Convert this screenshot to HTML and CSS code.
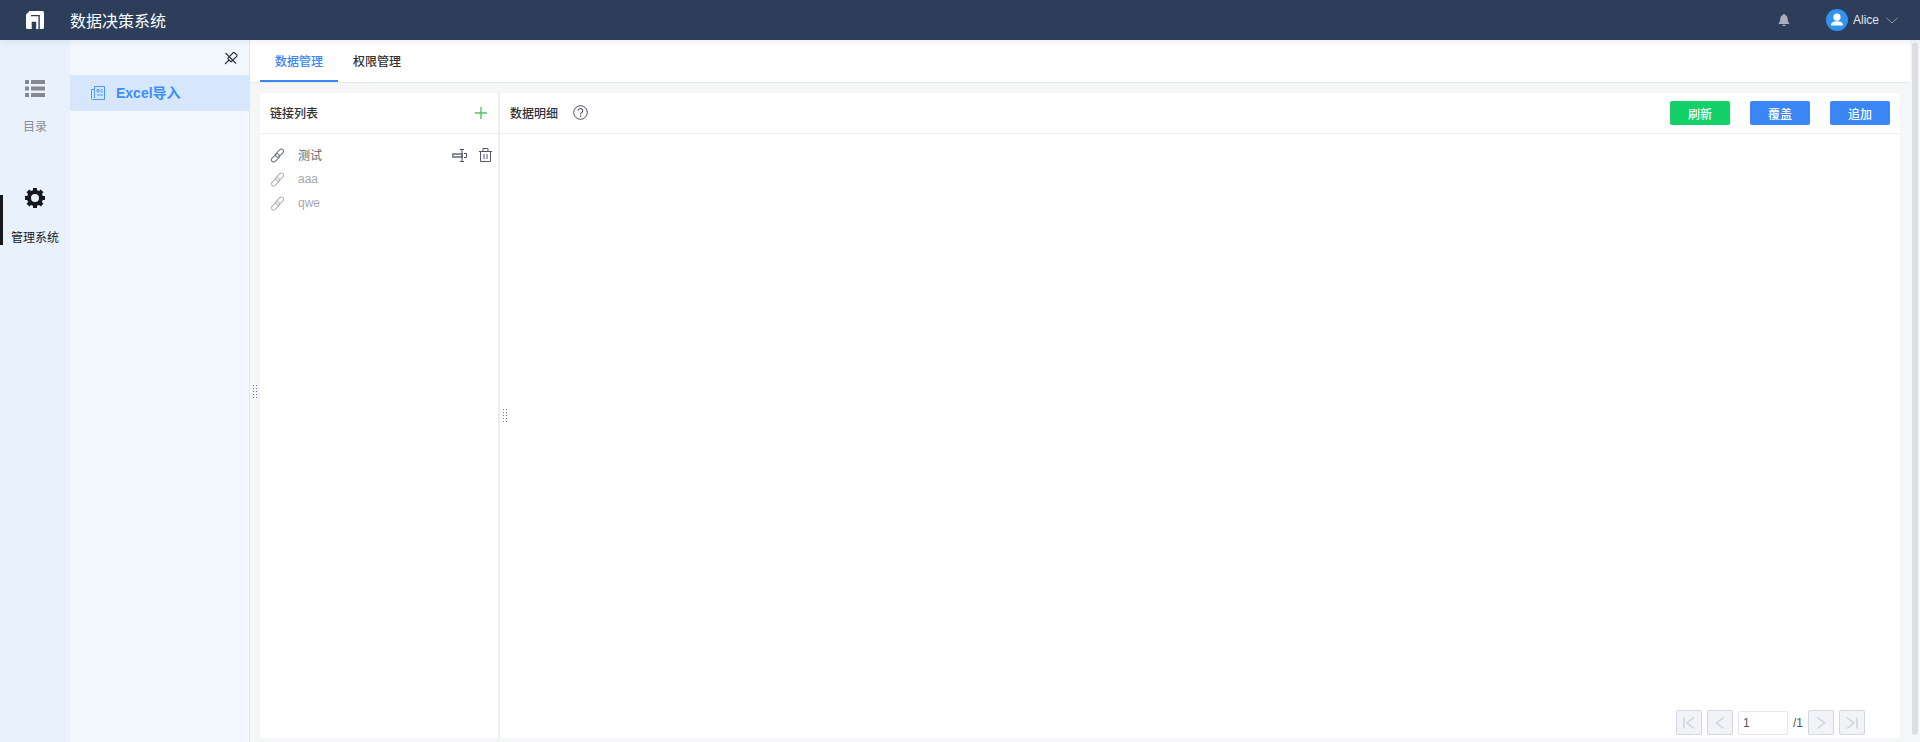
FILE: index.html
```html
<!DOCTYPE html>
<html lang="zh">
<head>
<meta charset="utf-8">
<title>数据决策系统</title>
<link rel="stylesheet" href="styles.css">
</head>
<body>
<header class="topbar">
  <svg class="logo" viewBox="0 0 18 18"><path fill="#fff" d="M3.500 0H16.500Q18 0 18 1.500V16.500Q18 18 16.500 18H1.500Q0 18 0 16.500V3.500Z"/><path fill="#2c3e5a" d="M5.200 4H13.800V18H12.400V5.200H4.400ZM5.700 10.800H10.200V18H5.700Z"/></svg>
  <div class="title">数据决策系统</div>
  <div class="spacer"></div>
  <svg class="bell" viewBox="0 0 12 12"><path fill="#a9b0bc" d="M6 0a1 1 0 0 1 1 1.100C9 1.600 9.700 3.300 9.700 5c0 2 .6 3.300 1.600 4.300V10H.7v-.7C1.700 8.300 2.300 7 2.300 5c0-1.700.7-3.400 2.700-3.900A1 1 0 0 1 6 0ZM4.500 10.800h3V12h-3Z"/></svg>
  <svg class="avatar" viewBox="0 0 22 22"><circle cx="11" cy="11" r="11" fill="#3292f0"/><circle cx="11" cy="8.200" r="3.600" fill="#fff"/><path fill="#fff" d="M5 16.500c0-3 2.500-4.200 6-4.200s6 1.200 6 4.200Z"/></svg>
  <span class="user">Alice</span>
  <svg class="chev" viewBox="0 0 12 7"><path fill="none" stroke="#8b95a6" stroke-width="1" d="M.5.800 6 6 11.500.800"/></svg>
</header>
<div class="main">
  <nav class="rail">
    <div class="rail-item">
      <svg class="rail-icon" viewBox="0 0 20 17"><path fill="#85888f" d="M0 0h4v4H0zM6 0h14v4H6zM0 6.500h4v4H0zM6 6.500h14v4H6zM0 13h4v4H0zM6 13h14v4H6z"/></svg>
      <span class="rail-label">目录</span>
    </div>
    <div class="rail-item active">
      <svg class="rail-icon gear" viewBox="0 0 20 20"><circle cx="10" cy="10" r="6" fill="none" stroke="#16181d" stroke-width="4"/><g fill="#16181d"><rect x="8" y="0" width="4" height="4"/><rect x="8" y="0" width="4" height="4" transform="rotate(45 10 10)"/><rect x="8" y="0" width="4" height="4" transform="rotate(90 10 10)"/><rect x="8" y="0" width="4" height="4" transform="rotate(135 10 10)"/><rect x="8" y="0" width="4" height="4" transform="rotate(180 10 10)"/><rect x="8" y="0" width="4" height="4" transform="rotate(225 10 10)"/><rect x="8" y="0" width="4" height="4" transform="rotate(270 10 10)"/><rect x="8" y="0" width="4" height="4" transform="rotate(315 10 10)"/></g></svg>
      <span class="rail-label">管理系统</span>
    </div>
  </nav>
  <aside class="side">
    <div class="side-top">
      <svg class="pin" viewBox="0 0 14 14"><g fill="none" stroke="#2b3240" stroke-width="1.100"><rect x="4" y="3.500" width="9" height="5" rx="1" transform="rotate(-45 8.500 6)"/><path d="M5 9 1 13"/><path d="M1.500 2 12 12.500"/></g></svg>
    </div>
    <div class="side-item">
      <svg class="doc" viewBox="0 0 14 14"><g fill="none" stroke="#4d98f3" stroke-width="1"><path d="M3.500 3.500V.5h10v13H1.500a1 1 0 0 1-1-1V3.500h3V12"/><path d="M6 3.500h2v2.500H6zM9.500 4h2.500M9.500 6h2.500M6 9h6"/></g></svg>
      <span>Excel导入</span>
    </div>
    <i class="grip side-grip"></i>
  </aside>
  <section class="workspace">
    <div class="content-col">
      <div class="tabs">
        <div class="tab current">数据管理</div>
        <div class="tab">权限管理</div>
      </div>
      <div class="board">
        <div class="list-panel">
          <div class="panel-head">
            <span class="panel-title">链接列表</span>
            <svg class="plus" viewBox="0 0 12 12"><path fill="#55c268" d="M5.300 0h1.400v5.300H12v1.400H6.700V12H5.300V6.700H0V5.300h5.300Z"/></svg>
          </div>
          <ul class="links">
            <li class="link on">
              <svg class="chain" viewBox="0 0 15 15"><g fill="none" stroke="#6b707c" stroke-width="1"><rect x="4.800" y="2.900" width="9.500" height="4.400" rx="2.200" transform="rotate(-45 9.500 5.100)"/><rect x=".7" y="7.700" width="9.500" height="4.400" rx="2.200" transform="rotate(-45 5.500 9.900)"/></g></svg>
              <span class="link-name">测试</span>
              <svg class="act-edit" viewBox="0 0 15 13"><path fill="none" stroke="#8c8f96" stroke-width="2" d="M1 5h9v3H1z"/><path fill="none" stroke="#4a4f66" stroke-width="1" d="M10 .5v12M8 .5h4M8 12.500h4M12 4.500h2.500v4H12"/></svg>
              <svg class="act-del" viewBox="0 0 13 14"><g fill="none" stroke="#5a5570" stroke-width="1"><path d="M0 3.500h13M4 3.500V.5h5v3M1.500 3.500v10h10v-10M5 6v5M8 6v5"/></g></svg>
            </li>
            <li class="link">
              <svg class="chain" viewBox="0 0 15 15"><g fill="none" stroke="#aeb1b7" stroke-width="1"><rect x="4.800" y="2.900" width="9.500" height="4.400" rx="2.200" transform="rotate(-45 9.500 5.100)"/><rect x=".7" y="7.700" width="9.500" height="4.400" rx="2.200" transform="rotate(-45 5.500 9.900)"/></g></svg>
              <span class="link-name">aaa</span>
            </li>
            <li class="link">
              <svg class="chain" viewBox="0 0 15 15"><g fill="none" stroke="#aeb1b7" stroke-width="1"><rect x="4.800" y="2.900" width="9.500" height="4.400" rx="2.200" transform="rotate(-45 9.500 5.100)"/><rect x=".7" y="7.700" width="9.500" height="4.400" rx="2.200" transform="rotate(-45 5.500 9.900)"/></g></svg>
              <span class="link-name">qwe</span>
            </li>
          </ul>
        </div>
        <div class="detail-panel">
          <div class="panel-head detail-head">
            <span class="panel-title">数据明细</span>
            <svg class="help" viewBox="0 0 15 15"><circle cx="7.500" cy="7.500" r="6.800" fill="none" stroke="#4a4f5c" stroke-width="1"/><path fill="none" stroke="#4a4f5c" stroke-width="1.100" d="M5.300 5.800a2.200 2.200 0 1 1 3.400 1.800c-.8.500-1.200.9-1.200 1.800"/><circle cx="7.500" cy="11.300" r=".8" fill="#4a4f5c"/></svg>
            <div class="spacer"></div>
            <button class="btn green">刷新</button>
            <button class="btn blue">覆盖</button>
            <button class="btn blue">追加</button>
          </div>
          <div class="detail-body"></div>
          <div class="pager">
            <span class="pg"><svg viewBox="0 0 14 14"><path fill="none" stroke="#cfd2d9" stroke-width="1.500" d="M2 1.500v11M12 1.500 5 7l7 5.500"/></svg></span>
            <span class="pg"><svg viewBox="0 0 14 14"><path fill="none" stroke="#cfd2d9" stroke-width="1.500" d="M10.500 1.500 3.500 7l7 5.500"/></svg></span>
            <input class="pg-input" value="1">
            <span class="pg-total">/1</span>
            <span class="pg"><svg viewBox="0 0 14 14"><path fill="none" stroke="#cfd2d9" stroke-width="1.500" d="M3.500 1.500l7 5.500-7 5.500"/></svg></span>
            <span class="pg"><svg viewBox="0 0 14 14"><path fill="none" stroke="#cfd2d9" stroke-width="1.500" d="M12 1.500v11M2 1.500 9 7l-7 5.500"/></svg></span>
          </div>
          <i class="grip detail-grip"></i>
        </div>
      </div>
    </div>
    <div class="scroll"><div class="thumb"></div></div>
  </section>
</div>
</body>
</html>
```
FILE: styles.css
```css
* { box-sizing: border-box; }
html, body { margin: 0; height: 100%; overflow: hidden; }
body {
  font-family: "Liberation Sans", "Noto Sans CJK SC", sans-serif;
  font-size: 12px;
  color: #333;
  display: flex;
  flex-direction: column;
  background: #f5f6f8;
}
.spacer { flex: 1; }
.topbar {
  height: 40px;
  flex: none;
  background: #2c3e5a;
  display: flex;
  align-items: center;
  position: relative;
  z-index: 2;
  box-shadow: 0 2px 6px rgba(44, 62, 90, .08);
}
.logo { width: 18px; height: 18px; margin-left: 26px; }
.title { margin-left: 26px; font-size: 16px; color: #fff; }
.bell { width: 12px; height: 12px; margin-right: 36px; }
.avatar { width: 22px; height: 22px; }
.user { margin-left: 5px; color: #e3e6eb; font-size: 12px; }
.chev { width: 12px; height: 7px; margin-left: 7px; margin-right: 22px; }
.main { flex: 1; display: flex; min-height: 0; }
.rail {
  width: 70px;
  flex: none;
  background: #e9f1fd;
  display: flex;
  flex-direction: column;
  padding-top: 40px;
  gap: 53px;
}
.rail-item {
  display: flex;
  flex-direction: column;
  align-items: center;
  position: relative;
}
.rail-icon { width: 20px; height: 17px; flex: none; }
.rail-label { color: #8a8d93; line-height: 16px; margin-top: 22px; }
.rail-item.active .rail-label { color: #16181d; }
.rail-item.active::before {
  content: "";
  position: absolute;
  left: 0;
  top: 7px;
  width: 3px;
  height: 50px;
  background: #16181d;
}
.gear { height: 20px; }
.side {
  width: 180px;
  flex: none;
  background: #f3f7fe;
  border-right: 1px solid #dfe3ea;
  position: relative;
}
.side-top { height: 35px; display: flex; justify-content: flex-end; align-items: flex-end; padding: 0 11px 10px 0; }
.pin { width: 14px; height: 14px; }
.side-item {
  height: 36px;
  background: #d6e7fd;
  display: flex;
  align-items: center;
  padding-left: 21px;
  color: #3d8ff5;
  font-weight: 700;
  font-size: 14px;
}
.side-item span { margin-top: -2px; }
.doc { width: 14px; height: 14px; margin-right: 11px; }
.grip {
  position: absolute;
  width: 4px;
  height: 13px;
  background: linear-gradient(to right, #74779a 1px, transparent 1px) 0 0 / 3px 3px;
  -webkit-mask: linear-gradient(#000 1px, transparent 1px) 0 0 / 3px 3px;
  mask: linear-gradient(#000 1px, transparent 1px) 0 0 / 3px 3px;
}
.side-grip { left: 183px; top: 345px; z-index: 1; }
.workspace { flex: 1; display: flex; min-width: 0; }
.content-col { flex: 1; display: flex; flex-direction: column; min-width: 0; }
.tabs {
  height: 43px;
  flex: none;
  background: #fff;
  border-bottom: 1px solid #e6e8ec;
  display: flex;
  padding: 0 0 0 10px;
}
.tab {
  width: 78px;
  height: 42px;
  line-height: 44px;
  text-align: center;
  color: #333;
  font-weight: 500;
  font-size: 12px;
}
.tab.current { color: #3b86f5; border-bottom: 2px solid #3b86f5; }
.board { flex: 1; display: flex; padding: 10px 10px 4px; min-height: 0; }
.list-panel {
  width: 240px;
  flex: none;
  background: #fff;
  border-right: 2px solid #eceef1;
}
.detail-panel {
  flex: 1;
  background: #fff;
  display: flex;
  flex-direction: column;
  position: relative;
  min-width: 0;
}
.panel-head {
  height: 41px;
  border-bottom: 1px solid #eceef1;
  display: flex;
  align-items: center;
  padding: 0 12px 0 10px;
}
.panel-title { font-weight: 500; color: #333; margin-top: -2px; }
.plus { width: 12px; height: 12px; margin-left: auto; margin-right: -1px; }
.detail-head { padding-right: 10px; }
.help { width: 15px; height: 15px; margin-left: 15px; margin-top: -1px; }
.btn {
  width: 60px;
  height: 24px;
  border: 0;
  border-radius: 2px;
  color: #fff;
  font: 500 12px "Liberation Sans", "Noto Sans CJK SC", sans-serif;
  padding: 0;
  margin-left: 20px;
}
.btn.green { background: #14d068; margin-left: 0; }
.btn.blue { background: #3b86f5; }
.links { list-style: none; margin: 0; padding: 9px 0 0 10px; }
.link { height: 24px; display: flex; align-items: center; }
.chain { width: 15px; height: 15px; margin-right: 13px; }
.link-name { color: #a6a8ad; flex: 1; }
.link.on .link-name { color: #666; margin-top: -2px; }
.act-edit { width: 15px; height: 13px; }
.act-del { width: 13px; height: 14px; margin-left: 12px; margin-right: 6px; }
.detail-body { flex: 1; }
.pager {
  height: 28px;
  flex: none;
  display: flex;
  align-items: flex-start;
  justify-content: flex-end;
  padding-right: 35px;
  gap: 5px;
}
.pg {
  width: 26px;
  height: 25px;
  background: #f2f3f6;
  border: 1px solid #d4d7dd;
  border-radius: 2px;
  display: flex;
  align-items: center;
  justify-content: center;
}
.pg svg { width: 14px; height: 14px; }
.pg-input {
  width: 50px;
  height: 24px;
  margin-top: 1px;
  border: 1px solid #e6e8ec;
  border-radius: 2px;
  padding: 0 4px;
  font: 12px "Liberation Sans", sans-serif;
  color: #555;
  background: #fff;
  outline: 0;
}
.pg-total { width: 10px; line-height: 26px; color: #555; }
.detail-grip { left: 3px; top: 316px; }
.scroll { width: 10px; flex: none; background: #f5f6f8; padding: 3px 2px 7px; }
.thumb { height: 100%; background: #dcdee2; border-radius: 3px; }
```
